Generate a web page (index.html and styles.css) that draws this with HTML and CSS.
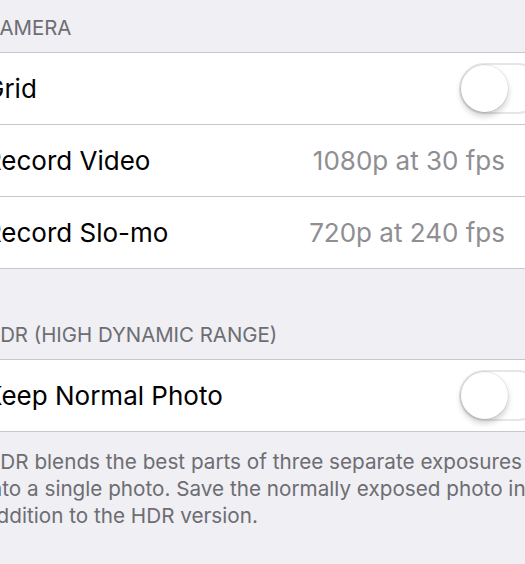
FILE: index.html
```html
<!DOCTYPE html>
<html lang="en">
  <head>
    <meta charset="UTF-8" />
    <meta name="viewport" content="width=device-width, initial-scale=1.0" />
    <title>Camera Settings</title>
    <link rel="stylesheet" href="styles.css">
  </head>
  <body>
    <div class="screen">
      <div class="section-head">CAMERA</div>
      <div class="group">
        <div class="cell">
          <span class="label">Grid</span>
          <span class="switch"><span class="knob"></span></span>
        </div>
        <div class="cell">
          <span class="label">Record Video</span>
          <span class="value">1080p at 30 fps</span>
        </div>
        <div class="cell">
          <span class="label">Record Slo-mo</span>
          <span class="value">720p at 240 fps</span>
        </div>
      </div>

      <div class="section-head spaced">HDR (HIGH DYNAMIC RANGE)</div>
      <div class="group">
        <div class="cell">
          <span class="label">Keep Normal Photo</span>
          <span class="switch"><span class="knob"></span></span>
        </div>
      </div>
      <div class="section-foot">
        HDR blends the best parts of three separate exposures<br>
        into a single photo. Save the normally exposed photo in<br>
        addition to the HDR version.
      </div>
    </div>
  </body>
</html>
```

FILE: styles.css
```css
:root {
  --bg: #efeff4;
  --line: #c8c7cc;
  --head: #6d6d72;
  --value: #8e8e93;
  --font: 'Inter', 'Liberation Sans', Helvetica, Arial, sans-serif;
}
html, body {
  margin: 0;
  height: 100%;
  overflow: hidden;
  background: var(--bg);
  font-family: var(--font);
}
.screen {
  width: 560px;
  margin-left: -15px;
}
.section-head {
  padding: 16px 0 12px;
  font-size: 20.4px;
  line-height: 24px;
  color: var(--head);
}
.section-head.spaced { padding-top: 54px; }
.group {
  background: #fff;
  border-top: 1px solid var(--line);
  border-bottom: 1px solid var(--line);
}
.cell {
  height: 71px;
  display: flex;
  align-items: center;
  justify-content: space-between;
  padding-right: 40px;
  border-bottom: 1px solid var(--line);
}
.cell:last-child { border-bottom: none; }
.label { font-size: 26px; color: #000; }
.value { font-size: 26px; color: var(--value); }
.switch {
  width: 84px;
  height: 51px;
  box-sizing: border-box;
  margin-right: -38px;
  border: 2px solid #e5e5ea;
  border-radius: 26px;
  background: #fff;
  display: flex;
  align-items: center;
}
.knob {
  width: 47px;
  height: 47px;
  border-radius: 50%;
  background: #fff;
  box-shadow: 0 0 0 0.5px rgba(0,0,0,0.12), 0 4px 6px rgba(0,0,0,0.2);
}
.section-foot {
  padding-top: 16px;
  font-size: 20.7px;
  line-height: 27px;
  color: var(--head);
}
```
